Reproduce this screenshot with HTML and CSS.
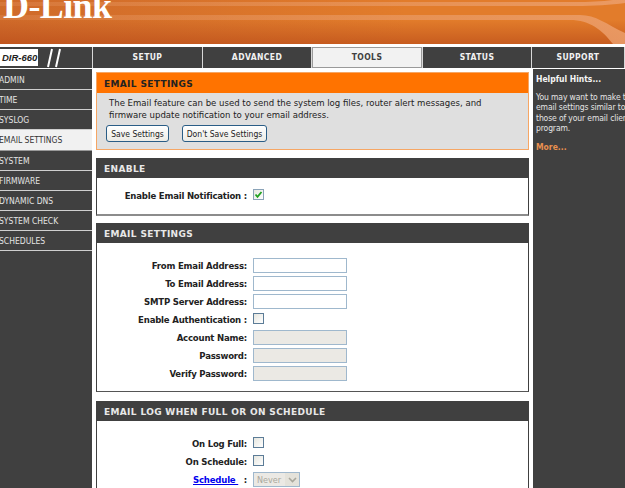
FILE: index.html
```html
<!DOCTYPE html>
<html lang="en">
<head>
<meta charset="utf-8">
<title>D-Link DIR-660 Email Settings</title>
<link rel="stylesheet" href="styles.css">
</head>
<body>
<header class="banner">
  <svg class="banner-stripes" viewBox="0 0 625 44" aria-hidden="true">
    <defs>
      <linearGradient id="stripe" x1="0" x2="1" y1="0" y2="0">
        <stop offset="0" stop-color="#e89a68" stop-opacity=".25"/>
        <stop offset="1" stop-color="#ec9f6c" stop-opacity=".85"/>
      </linearGradient>
    </defs>
    <path d="M0 2H575C595 2 610 1 625 -2V3C610 5 595 6 575 6H0Z" fill="url(#stripe)"/>
    <path d="M0 15H580C596 15 606 24 625 33V44H613C602 30 590 20 570 20H0Z" fill="url(#stripe)"/>
  </svg>
  <span class="logo">D-Link</span>
</header>
<nav class="topnav">
  <div class="model"><span class="model-name">DIR-660</span><svg class="slashes" width="20" height="20" viewBox="0 0 20 20" aria-hidden="true"><path d="M5 19L9 1M13 19L17 1" stroke="#fff" stroke-width="2"/></svg></div>
  <div class="tab">SETUP</div>
  <div class="tab">ADVANCED</div>
  <div class="tab tab-active">TOOLS</div>
  <div class="tab">STATUS</div>
  <div class="tab">SUPPORT</div>
</nav>
<div class="layout">
  <aside class="sidebar">
    <div class="side-item">ADMIN</div>
    <div class="side-item">TIME</div>
    <div class="side-item">SYSLOG</div>
    <div class="side-item side-active">EMAIL SETTINGS</div>
    <div class="side-item">SYSTEM</div>
    <div class="side-item">FIRMWARE</div>
    <div class="side-item">DYNAMIC DNS</div>
    <div class="side-item">SYSTEM CHECK</div>
    <div class="side-item">SCHEDULES</div>
  </aside>
  <main class="main">
    <section class="intro">
      <h1 class="intro-title">EMAIL SETTINGS</h1>
      <div class="intro-body">
        <p class="intro-text">The Email feature can be used to send the system log files, router alert messages, and<br>firmware update notification to your email address.</p>
        <div class="actions">
          <button class="btn btn-save" type="button">Save Settings</button>
          <button class="btn btn-dont" type="button">Don't Save Settings</button>
        </div>
      </div>
    </section>
    <section class="box box-enable">
      <h2 class="box-title">ENABLE</h2>
      <div class="box-body enable-body">
        <div class="row">
          <label class="label">Enable Email Notification :</label>
          <span class="check check-on"><svg width="9" height="9" viewBox="0 0 9 9" aria-hidden="true"><path d="M1.5 4.5L3.5 6.8L7.5 2" fill="none" stroke="#21a121" stroke-width="1.8"/></svg></span>
        </div>
      </div>
    </section>
    <section class="box box-email">
      <h2 class="box-title">EMAIL SETTINGS</h2>
      <div class="box-body email-body">
        <div class="row"><label class="label">From Email Address:</label><span class="input"></span></div>
        <div class="row"><label class="label">To Email Address:</label><span class="input"></span></div>
        <div class="row"><label class="label">SMTP Server Address:</label><span class="input"></span></div>
        <div class="row"><label class="label">Enable Authentication :</label><span class="check"></span></div>
        <div class="row"><label class="label">Account Name:</label><span class="input input-off"></span></div>
        <div class="row"><label class="label">Password:</label><span class="input input-off"></span></div>
        <div class="row"><label class="label">Verify Password:</label><span class="input input-off"></span></div>
      </div>
    </section>
    <section class="box box-log">
      <h2 class="box-title">EMAIL LOG WHEN FULL OR ON SCHEDULE</h2>
      <div class="box-body log-body">
        <div class="row"><label class="label">On Log Full:</label><span class="check"></span></div>
        <div class="row"><label class="label">On Schedule:</label><span class="check"></span></div>
        <div class="row"><label class="label"><a class="link" href="#">Schedule&nbsp;</a>&nbsp;&nbsp;:</label>
          <span class="select"><span class="select-value">Never</span><span class="select-arrow"><svg width="9" height="6" viewBox="0 0 9 6" aria-hidden="true"><path d="M1 1L4.5 4.5L8 1" fill="none" stroke="#a9a79c" stroke-width="1.6"/></svg></span></span>
        </div>
      </div>
    </section>
  </main>
  <aside class="hints">
    <h3 class="hints-title">Helpful Hints...</h3>
    <p class="hints-text">You may want to make the<br>email settings similar to<br>those of your email client<br>program.</p>
    <p class="hints-more">More...</p>
  </aside>
</div>
</body>
</html>
```
FILE: styles.css
```css
html, body {
  margin: 0;
  padding: 0;
  width: 625px;
  height: 488px;
  overflow: hidden;
  background: #fff;
  font-family: "DejaVu Sans Condensed", "DejaVu Sans", sans-serif;
  font-size: 10px;
  color: #111;
}
h1, h2, h3, p { margin: 0; font-weight: normal; }

.banner {
  position: relative;
  height: 44px;
  overflow: hidden;
  background: linear-gradient(to bottom, rgba(190, 80, 30, 0) 45%, rgba(185, 75, 25, .65) 100%), linear-gradient(to right, #cf6a2a, #e27c2b 65%);
}
.banner-stripes { position: absolute; inset: 0; width: 625px; height: 44px; }
.logo {
  position: absolute;
  left: 3px;
  top: -16px;
  font: bold 36px/44px "Liberation Serif", serif;
  color: #fff;
  letter-spacing: -.6px;
}

.topnav {
  display: grid;
  grid-template-columns: 92px 109px 108px 110px 108px 92px;
  column-gap: 1px;
  margin-top: 3px;
  height: 21px;
  background: #d8d8d8;
}
.model {
  display: flex;
  align-items: center;
  background: #404040;
}
.model-name {
  width: 38px;
  height: 17px;
  box-sizing: border-box;
  padding-left: 2px;
  background: #fff;
  color: #222;
  font: italic bold 9.5px/17px "Liberation Sans", sans-serif;
  white-space: nowrap;
}
.slashes { margin-left: 5px; }
.tab {
  background: #404040;
  color: #f2f2f2;
  text-align: center;
  font-size: 8.5px;
  font-weight: bold;
  line-height: 21px;
  letter-spacing: .4px;
}
.tab-active {
  background: #f2f2f2;
  color: #404040;
  border: 1px solid #9a9a9a;
  box-sizing: border-box;
  line-height: 19px;
}

.layout {
  display: grid;
  grid-template-columns: 92px 441px 92px;
  height: 420px;
  margin-top: 1px;
}
.sidebar {
  background: #404040;
  padding-top: 1px;
}
.side-item {
  height: 19px;
  border-bottom: 1px solid #cfcfcf;
  color: #e4e4e4;
  font-size: 8.5px;
  line-height: 20px;
  text-indent: -1px;
  white-space: nowrap;
}
.side-active {
  height: 20px;
  background: #f1f1f1;
  color: #333;
  border-bottom-color: #999;
}

.main {
  box-sizing: border-box;
  padding: 3px 4px 0;
  overflow: hidden;
  background: #fff;
}
.intro {
  height: 78px;
  box-sizing: border-box;
  border: 1px solid #f6a664;
  background: #dfdfdf;
}
.intro-title {
  height: 20px;
  background: #ff7300;
  color: #222;
  padding-left: 7px;
  font: bold 9px/22px "DejaVu Sans", sans-serif;
  letter-spacing: .35px;
}
.intro-body { padding: 4px 0 0 9px; }
.intro-text {
  font-size: 9.5px;
  line-height: 12px;
  padding-left: 3px;
  white-space: nowrap;
  color: #222;
}
.actions { display: flex; gap: 13px; margin-top: 4px; }
.btn {
  height: 17px;
  box-sizing: border-box;
  padding: 0;
  border: 1px solid #2a5d86;
  border-radius: 3px;
  background: linear-gradient(#fff, #ecebe5);
  font-family: "DejaVu Sans Condensed", "DejaVu Sans", sans-serif;
  font-size: 8.5px;
  line-height: 14px;
  color: #222;
}
.btn-save { width: 63px; }
.btn-dont { width: 85px; }

.box {
  box-sizing: border-box;
  margin-top: 8px;
  border: 1px solid #404040;
  border-top: 0;
  border-bottom: 2px solid #8c8c8c;
}
.box-enable { height: 58px; }
.box-email { height: 169px; margin-top: 7px; border-bottom: 1px solid #555; }
.box-log { margin-top: 9px; height: 100px; border-bottom: 0; }
.box-title {
  height: 20px;
  margin: 0 -1px;
  padding-left: 8px;
  background: #404040;
  color: #e8e8e8;
  font: bold 9px/22px "DejaVu Sans", sans-serif;
  letter-spacing: .35px;
}
.box-body {
  display: flex;
  flex-direction: column;
  gap: 3px;
  background: #fff;
}
.enable-body { padding-top: 10px; }
.email-body { padding-top: 15px; }
.log-body { padding-top: 15px; gap: 3px; }
.row {
  display: flex;
  align-items: center;
  gap: 6px;
  height: 15px;
}
.label {
  width: 150px;
  text-align: right;
  font-size: 9.5px;
  font-weight: bold;
  line-height: 15px;
  letter-spacing: -.2px;
  color: #222;
  white-space: nowrap;
}
.input {
  display: block;
  width: 94px;
  height: 15px;
  box-sizing: border-box;
  border: 1px solid #9fb8cd;
  background: #fff;
}
.input-off { background: #ebe9e4; }
.check {
  display: flex;
  align-items: center;
  justify-content: center;
  width: 11px;
  height: 11px;
  box-sizing: border-box;
  margin-top: -3px;
  border: 1px solid #5c7c97;
  background: linear-gradient(135deg, #e6e6df, #fff);
}
.check-on { border-color: #8aa3b8; }
.link { color: #0000ee; text-decoration: underline; }
.select {
  display: flex;
  align-items: center;
  justify-content: space-between;
  width: 47px;
  height: 15px;
  box-sizing: border-box;
  border: 1px solid #9fb8cd;
  background: #ebe9e4;
}
.select-value { padding-left: 3px; color: #aaa89d; font-size: 9px; }
.select-arrow {
  display: flex;
  align-items: center;
  justify-content: center;
  width: 14px;
  height: 13px;
  background: #e4e2da;
}

.hints {
  background: #404040;
  color: #e4e4e4;
  padding: 4px 0 0 3px;
  overflow: hidden;
  white-space: nowrap;
}
.hints-title { font-size: 8.5px; font-weight: bold; line-height: 13px; color: #f5f5f5; }
.hints-text { margin-top: 6px; font-size: 8.5px; line-height: 10.4px; letter-spacing: -.12px; }
.hints-more { margin-top: 7px; font-size: 8.5px; font-weight: bold; line-height: 13px; color: #e8904f; }
```
